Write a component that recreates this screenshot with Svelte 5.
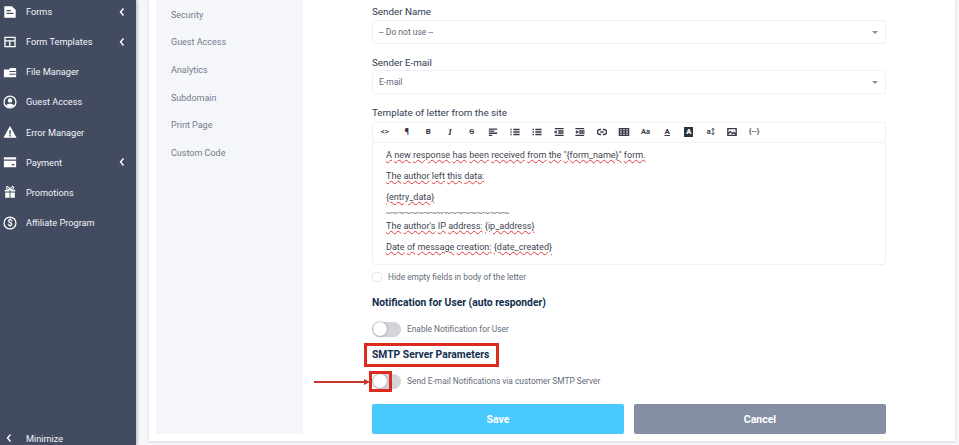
<script>
  const menu = [
    { label: "Forms", icon: "forms", sub: true },
    { label: "Form Templates", icon: "templates", sub: true },
    { label: "File Manager", icon: "files" },
    { label: "Guest Access", icon: "guest" },
    { label: "Error Manager", icon: "error" },
    { label: "Payment", icon: "payment", sub: true },
    { label: "Promotions", icon: "gift" },
    { label: "Affiliate Program", icon: "dollar" }
  ];

  const tabs = ["Security", "Guest Access", "Analytics", "Subdomain", "Print Page", "Custom Code"];

  const letter = [
    { text: 'A new response has been received from the "{form_name}" form.', cls: "" },
    { text: "The author left this data:", cls: "" },
    { text: "{entry_data}", cls: "tight" },
    { text: "~-~-~-~-~-~-~-~-~-~-~-~-~-~-~-~-~-~-~", cls: "tight plain" },
    { text: "The author's IP address: {ip_address}", cls: "" },
    { text: "Date of message creation: {date_created}", cls: "" }
  ];
</script>

{#snippet chevron()}
  <svg class="chevron" viewBox="0 0 8 10" width="8" height="10">
    <path d="M5.5 1.5 2.5 5l3 3.5" fill="none" stroke="currentColor" stroke-width="1.4" />
  </svg>
{/snippet}

{#snippet tool(d)}
  <svg viewBox="0 0 12 12" width="10" height="10">
    <path {d} fill="none" stroke="#353a45" stroke-width="1.6" />
  </svg>
{/snippet}

<div class="page">
  <aside class="sidebar">
    <nav>
      {#each menu as item}
        <div class="item">
          <svg class="icon" viewBox="0 0 16 16" width="14" height="14">
            {#if item.icon === "forms"}
              <path d="M1.500 1.500h8.500l4.500 4v9h-13z" fill="currentColor" />
              <path d="M4 6.500h5M4 9.500h8" stroke="#434b60" stroke-width="1.300" />
            {:else if item.icon === "templates"}
              <path fill-rule="evenodd" d="M1.500 2h13v12h-13zM3 3.500v2.500h10V3.500zM3 7.500V12.500h4V7.500zM8.500 7.500V12.500H13V7.500z" fill="currentColor" />
            {:else if item.icon === "files"}
              <path d="M1 5h6l1-1.500h7V14H1z" fill="currentColor" />
              <path d="M7.500 7.500h7M7.500 10.500h7" stroke="#434b60" stroke-width="1.200" />
            {:else if item.icon === "guest"}
              <circle cx="8" cy="8" r="6.800" fill="none" stroke="currentColor" stroke-width="1.500" />
              <circle cx="8" cy="6.200" r="2.500" fill="currentColor" />
              <path d="M3.500 12c1-2.500 8-2.500 9 0-2 2.500-7 2.500-9 0z" fill="currentColor" />
            {:else if item.icon === "error"}
              <path d="M8 1 15.500 14.500H.5z" fill="currentColor" />
              <path d="M8 6v4.500M8 11.300v1.700" stroke="#434b60" stroke-width="1.600" />
            {:else if item.icon === "payment"}
              <path d="M1 2.500h14v2.500H1zM1 6.500h14v7.500H1z" fill="currentColor" />
              <path d="M10 11h3" stroke="#434b60" stroke-width="1.500" />
            {:else if item.icon === "gift"}
              <path d="M2 5.500h5.500v2H2zM8.500 5.500H14v2H8.500zM2.500 8.500h5v6h-5zM8.500 8.500h5v6h-5z" fill="currentColor" />
              <path d="M8 5C6 1 3.500 1 4 3.200S6.500 5 8 5zM8 5C10 1 12.500 1 12 3.200S9.500 5 8 5z" fill="none" stroke="currentColor" stroke-width="1.200" />
            {:else}
              <circle cx="8" cy="8" r="6.800" fill="none" stroke="currentColor" stroke-width="1.400" />
              <text x="8" y="11.500" text-anchor="middle" font-size="10" font-weight="700" fill="currentColor">$</text>
            {/if}
          </svg>
          <span class="label">{item.label}</span>
          {#if item.sub}{@render chevron()}{/if}
        </div>
      {/each}
    </nav>
    <div class="minimize">
      {@render chevron()}
      <span>Minimize</span>
    </div>
  </aside>

  <main class="content">
    <section class="card">
      <div class="tabs">
        {#each tabs as tab}
          <div class="tab">{tab}</div>
        {/each}
      </div>

      <form class="form">
        <div class="label-row">Sender Name</div>
        <div class="select">-- Do not use --<i></i></div>

        <div class="label-row second">Sender E-mail</div>
        <div class="select">E-mail<i></i></div>

        <div class="label-row second third">Template of letter from the site</div>
        <div class="editor">
          <div class="toolbar">
            <span class="t code">&lt;&gt;</span>
            <span class="t">¶</span>
            <span class="t bold">B</span>
            <span class="t ital">I</span>
            <span class="t strike">S</span>
            <span class="t">{@render tool("M1 2.500h10M1 5h6.500M1 7.500h10M1 10h4")}</span>
            <span class="t">{@render tool("M.5 3h1.500M.5 6h1.500M.5 9h1.500M4 3h7.500M4 6h7.500M4 9h7.500")}</span>
            <span class="t">{@render tool("M1.500 2v2M1.500 5v2M1.500 8v2M4 3h7.500M4 6h7.500M4 9h7.500")}</span>
            <span class="t">{@render tool("M1 2h10.500M5 4.800h6.500M5 7.200h6.500M1 10h10.500M3.500 4.500 1 6l2.500 1.500")}</span>
            <span class="t">{@render tool("M.5 2h10.500M5 4.800h6.500M5 7.200h6.500M.5 10h10.500M1 4.500 3.500 6 1 7.500")}</span>
            <span class="t">{@render tool("M5 3H3.500a3 3 0 0 0 0 6H5M7 3h1.500a3 3 0 0 1 0 6H7M4 6h4")}</span>
            <span class="t table">{@render tool("M.5 2h11v8H.5zM.5 4.700h11M.5 7.300h11M4.200 2v8M7.800 2v8")}</span>
            <span class="t small">Aa</span>
            <span class="t under">A</span>
            <span class="t"><b class="inverse">A</b></span>
            <span class="t small">a<svg viewBox="0 0 5 10" width="4" height="9"><path d="M2.500 1v8M.8 3 2.500 1 4.200 3M.8 7l1.700 2 1.700-2" fill="none" stroke="#353a45" stroke-width="1.100" /></svg></span>
            <span class="t">{@render tool("M1 2h10v8H1zM1 8.500l3-3 2.500 2.500L8 6.500l3 2.500")}</span>
            <span class="t code">&#123;--&#125;</span>
          </div>
          <div class="letter">
            {#each letter as line}
              <p class={line.cls}>
                {#each line.text.split(" ") as word, i}{#if i > 0}{" "}{/if}<span class="typo">{word}</span>{/each}
              </p>
            {/each}
          </div>
        </div>

        <label class="check">
          <span class="box"></span>
          Hide empty fields in body of the letter
        </label>

        <h3 class="first">Notification for User (auto responder)</h3>
        <div class="switch-row">
          <span class="switch"></span>
          Enable Notification for User
        </div>

        <h3>SMTP Server Parameters</h3>
        <div class="switch-row">
          <span class="switch"></span>
          Send E-mail Notifications via customer SMTP Server
        </div>

        <div class="buttons">
          <button type="button" class="save">Save</button>
          <button type="button" class="cancel">Cancel</button>
        </div>

        <!-- annotations drawn over the screenshot -->
        <span class="mark heading-mark"></span>
        <span class="mark toggle-mark"></span>
        <span class="arrow"></span>
      </form>
    </section>
  </main>
</div>

<style>
  :global(body) {
    margin: 0;
    overflow: hidden;
  }

  * {
    box-sizing: border-box;
  }

  .page {
    display: flex;
    height: 445px;
    overflow: hidden;
    background: #f5f6fb;
    font-family: Roboto, "Liberation Sans", sans-serif;
  }

  /* Sidebar */
  .sidebar {
    flex: 0 0 136px;
    display: flex;
    flex-direction: column;
    justify-content: space-between;
    background: #434b60;
    color: #fff;
    box-shadow: 1px 0 3px rgba(40, 45, 60, 0.35);
    overflow: hidden;
  }

  nav {
    margin-top: -3.500px;
  }

  .item {
    display: flex;
    align-items: center;
    height: 30.150px;
    padding: 0 10px 0 3px;
    font-size: 9.200px;
  }

  .icon {
    margin-right: 9px;
    flex: none;
    color: #fff;
  }

  .label {
    flex: 1;
    color: #f1f3f8;
  }

  .chevron {
    color: #fff;
    flex: none;
  }

  .minimize {
    display: flex;
    align-items: center;
    gap: 13px;
    height: 14px;
    padding-left: 5px;
    font-size: 9.200px;
    color: #f1f3f8;
  }

  /* Content */
  .content {
    flex: 1;
    padding: 0 4px 4px 13px;
    min-width: 0;
  }

  .card {
    display: flex;
    height: 100%;
    padding: 0 0 7px 7px;
    background: #fff;
    box-shadow: 0 1px 3px rgba(70, 80, 110, 0.18);
  }

  .tabs {
    flex: 0 0 147px;
    padding-top: 1px;
    background: #f5f6fa;
  }

  .tab {
    display: flex;
    align-items: center;
    height: 27.600px;
    padding-left: 15px;
    font-size: 9px;
    color: #737a8b;
  }

  .form {
    position: relative;
    flex: 0 0 514px;
    margin-left: 69px;
    padding-top: 6px;
    font-size: 8.350px;
    color: #646b7a;
  }

  .label-row {
    height: 14px;
    line-height: 11px;
    font-size: 9.800px;
    color: #2f3d50;
  }

  .label-row.second {
    margin-top: 13px;
    height: 13px;
  }

  .label-row.third {
    height: 15px;
  }

  .select {
    position: relative;
    display: flex;
    align-items: center;
    height: 24px;
    padding-left: 6px;
    border: 1px solid #f0f1f6;
    border-radius: 3px;
    font-size: 8.500px;
    color: #5f6675;
  }

  .select i {
    position: absolute;
    right: 7px;
    top: 10px;
    border: 3px solid transparent;
    border-top: 3.500px solid #8b8f99;
    border-bottom: 0;
    width: 0;
  }

  .editor {
    height: 143px;
    border: 1px solid #f0f1f6;
    border-radius: 3px;
  }

  .toolbar {
    display: flex;
    align-items: center;
    height: 20px;
    padding: 0 0 2px 1px;
    border-bottom: 1px solid #f0f1f6;
  }

  .t {
    display: flex;
    justify-content: center;
    align-items: center;
    flex: 0 0 21.730px;
    font-size: 9px;
    font-weight: 700;
    color: #353a45;
  }

  .t.code {
    font-size: 8px;
    font-weight: 500;
  }

  .t.bold {
    font-size: 8px;
  }

  .t.ital {
    font-style: italic;
    font-family: "Liberation Serif", serif;
  }

  .t.strike {
    text-decoration: line-through;
    font-size: 8px;
    font-weight: 500;
  }

  .t.small {
    font-size: 7.500px;
  }

  .t.under {
    text-decoration: underline;
    font-size: 8px;
  }

  .t.table svg {
    width: 12px;
  }

  .inverse {
    display: block;
    width: 9px;
    height: 10px;
    line-height: 10px;
    text-align: center;
    background: #30343e;
    color: #fff;
    font-size: 7.500px;
  }

  .letter {
    padding: 7px 13px 0;
    font-size: 9.050px;
    color: #40454f;
  }

  .letter p {
    margin: 0 0 9.500px;
    line-height: 11.500px;
  }

  .letter p.tight {
    margin-bottom: 3px;
  }

  .typo {
    text-decoration: underline wavy #e03a3a 1px;
    text-underline-offset: 1px;
  }

  .plain .typo {
    text-decoration: none;
    font-size: 7.500px;
    letter-spacing: -0.300px;
  }

  .check {
    display: flex;
    align-items: center;
    gap: 6px;
    margin-top: 6px;
    height: 11px;
  }

  .box {
    width: 10px;
    height: 10px;
    border: 1px solid #e4e6ee;
    border-radius: 3px;
  }

  h3 {
    margin: 12px 0 0;
    height: 14px;
    line-height: 14px;
    font-size: 10.300px;
    font-weight: 700;
    color: #0f2c4d;
  }

  h3.first {
    margin-top: 14px;
  }

  .switch-row {
    display: flex;
    align-items: center;
    gap: 6px;
    margin-top: 12px;
    height: 14px;
  }

  .switch {
    position: relative;
    width: 29px;
    height: 15px;
    border-radius: 8px;
    background: #d3d4d8;
  }

  .switch::before {
    content: "";
    position: absolute;
    left: 1px;
    top: 0.500px;
    width: 14px;
    height: 14px;
    border-radius: 50%;
    background: #fff;
    box-shadow: 0 0 2px rgba(0, 0, 0, 0.45);
  }

  .buttons {
    display: flex;
    gap: 10px;
    margin-top: 16px;
  }

  .buttons button {
    flex: 1;
    height: 30px;
    border: 0;
    border-radius: 2px;
    color: #fff;
    font: 700 10.500px Roboto, "Liberation Sans", sans-serif;
  }

  .save {
    background: #4ac9ff;
  }

  .cancel {
    background: #858fa3;
  }

  .mark {
    position: absolute;
    border: 3px solid #dc2a1e;
  }

  .heading-mark {
    left: -8px;
    top: 343px;
    width: 135px;
    height: 24px;
  }

  .toggle-mark {
    left: -3px;
    top: 371px;
    width: 23px;
    height: 21px;
  }

  .arrow {
    position: absolute;
    left: -58px;
    top: 381px;
    width: 52px;
    height: 2px;
    background: #c8372c;
  }

  .arrow::after {
    content: "";
    position: absolute;
    right: -4px;
    top: -2.500px;
    border-left: 6px solid #c8372c;
    border-top: 3.500px solid transparent;
    border-bottom: 3.500px solid transparent;
  }
</style>
